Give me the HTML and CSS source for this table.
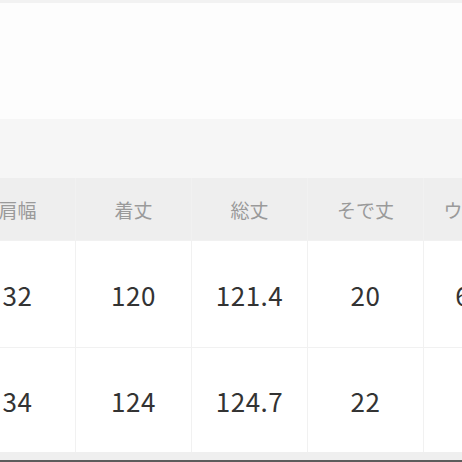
FILE: index.html
```html
<!DOCTYPE html>
<html lang="ja">
<head>
<meta charset="utf-8">
<link rel="stylesheet" href="styles.css">
</head>
<body>
<div class="page">
  <div class="topline"></div>
  <div class="blank"></div>
  <div class="band"></div>
  <div class="table">
    <div class="cell head">肩幅</div>
    <div class="cell head">着丈</div>
    <div class="cell head">総丈</div>
    <div class="cell head">そで丈</div>
    <div class="cell head">ウエスト</div>
    <div class="cell">32</div>
    <div class="cell">120</div>
    <div class="cell">121.4</div>
    <div class="cell">20</div>
    <div class="cell">62.5</div>
    <div class="cell">34</div>
    <div class="cell">124</div>
    <div class="cell">124.7</div>
    <div class="cell">22</div>
    <div class="cell">66</div>
  </div>
  <div class="footer"></div>
  <div class="darkline"></div>
</div>
</body>
</html>
```

FILE: styles.css
```css
html, body {
  margin: 0;
  padding: 0;
  width: 462px;
  height: 462px;
  overflow: hidden;
  background: #fdfdfd;
}
.page {
  display: flex;
  flex-direction: column;
  width: 462px;
  height: 462px;
  overflow: hidden;
  font-family: "Noto Sans CJK JP", "Noto Sans", sans-serif;
}
.topline {
  height: 3px;
  background: #f2f2f2;
  flex: none;
}
.blank {
  height: 116px;
  background: #fdfdfd;
  flex: none;
}
.band {
  height: 59px;
  background: #f6f6f6;
  flex: none;
}
.table {
  flex: none;
  display: grid;
  grid-template-columns: repeat(5, 115px);
  grid-template-rows: 62px 106px 104px;
  column-gap: 1px;
  row-gap: 1px;
  margin-left: -40px;
  width: 580px;
  background: #f1f1f1;
}
.cell {
  background: #ffffff;
  display: flex;
  align-items: center;
  justify-content: center;
  font-size: 26px;
  color: #333333;
  letter-spacing: 0.5px;
}
.cell.head {
  background: #eeeeee;
  font-size: 19px;
  color: #9a9a9a;
  letter-spacing: 0;
}
.footer {
  height: 8px;
  background: #efefef;
  flex: none;
}
.darkline {
  height: 3px;
  background: #5c5c5c;
  flex: none;
}
```
